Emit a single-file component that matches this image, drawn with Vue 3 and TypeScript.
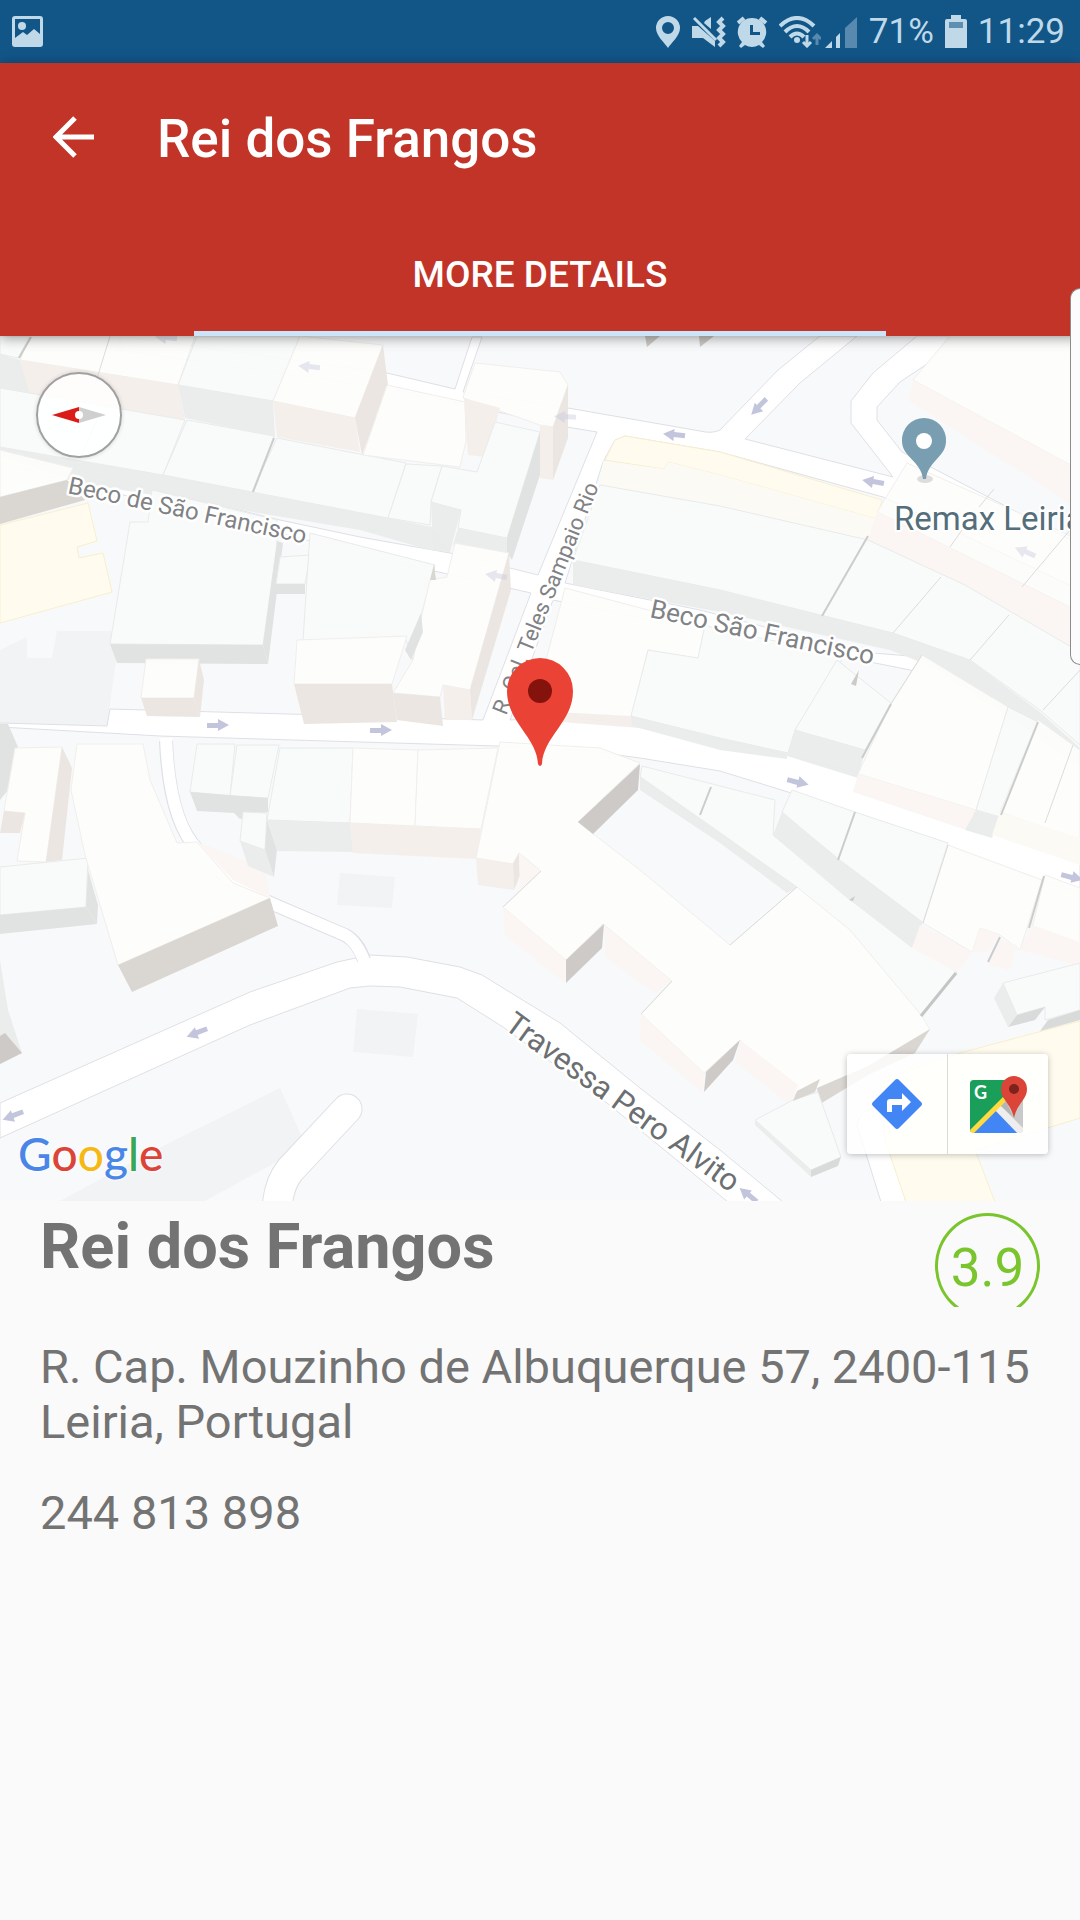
<script setup lang="ts">
interface Place {
  name: string
  rating: string
  address: string
  phone: string
}

interface Arrow {
  x: number
  y: number
  angle: number
  faint?: boolean
}

const place: Place = {
  name: 'Rei dos Frangos',
  rating: '3.9',
  address: 'R. Cap. Mouzinho de Albuquerque 57, 2400-115 Leiria, Portugal',
  phone: '244 813 898',
}

// [style class, polygon points] in map coordinates
type Shape = [string, string]

const ground: Shape[] = [
  ['plot', '0,650 27,637 27,658 52,658 57,631 120,631 107,726 0,723'],
  ['plot', '340,873 395,877 392,908 337,905'],
  ['plot', '357,1009 418,1014 413,1057 353,1052'],
  ['plot', '60,1201 155,1150 280,1088 302,1137 280,1160 205,1201'],
  ['sand', '0,525 88,503 97,541 77,547 79,558 103,553 112,592 0,623'],
]

const roads: string[] = [
  'M0,723 L107,726 L110,709 L360,716 L483,720 L531,593 L443,573 L360,554 L280,533 L70,482 L0,462 L0,452 L75,470 L280,520 L360,537 L450,553 L538,575 L597,432 L567,427 L387,388 L120,350 L120,336 L387,373 L455,389 L472,337 L482,337 L463,392 L568,408 L700,431 Q712,434 720,430 L778,370 L820,336 L857,336 L800,383 L745,439 L893,477 L851,423 L851,401 L873,373 L917,336 L953,336 L930,362 L900,382 L877,407 L877,420 L902,452 L1080,545 L1080,590 L883,497 L720,452 L625,436 L615,440 L603,462 L565,583 L700,610 L860,652 L935,658 L925,673 L870,662 L700,630 L553,600 L510,720 L560,717 L640,724 L720,740 L787,755 L860,773 L960,808 L1080,853 L1080,892 L1040,880 L945,845 L855,813 L788,792 L720,771 L640,758 L580,750 L498,746 L360,742 L160,736 L0,727 Z',
  'M0,1103 L250,992 L337,962 L370,955 L407,957 L460,967 L482,975 L560,1023 L640,1088 L720,1150 L783,1202 L728,1202 L673,1157 L607,1103 L503,1027 L457,998 L400,987 L370,986 L350,988 L250,1025 L0,1138 Z',
  'M857,1125 Q860,1108 880,1108 L906,1202 L881,1202 Z',
]

const buildings: Shape[] = [
  ['sand', '615,440 625,436 720,452 882,500 877,519 720,475 668,462 664,469 605,460'],
  ['sand', '885,1140 906,1202 995,1202 975,1150 1080,1118 1080,1021 960,1053 880,1080'],
  // north-west block
  ['grey', '0,336 30,336 18,358 0,354'],
  ['grey-side', '0,354 20,360 30,393 0,388'],
  ['cream', '30,336 195,336 178,385 20,360'],
  ['cream-side', '20,360 178,385 185,420 30,395'],
  ['grey', '197,336 300,336 273,401 178,385'],
  ['grey-side', '178,385 273,401 275,437 185,418'],
  ['cream', '300,336 383,345 355,418 273,401'],
  ['cream-side', '273,401 355,418 360,452 277,437'],
  ['cream-shade', '383,345 388,385 362,455 355,418'],
  ['grey-side', '0,447 163,475 252,492 388,518 432,527 450,552 430,550 360,530 75,482 0,456'],
  ['grey', '0,388 185,420 163,475 0,447'],
  ['grey', '187,420 274,436 252,492 163,475'],
  ['grey', '277,438 406,463 388,518 252,492'],
  ['cream', '387,385 465,402 466,441 460,467 363,455'],
  ['grey', '406,464 442,466 431,502 430,525 388,518'],
  ['cream', '475,363 560,372 568,385 553,427 540,425 463,398 464,394'],
  ['cream-side', '464,398 500,408 487,457 468,455'],
  ['cream-side', '540,425 553,427 553,480 540,478'],
  ['cream-shade', '568,385 568,438 553,480 553,427'],
  ['grey', '495,422 540,432 507,538 458,528 461,510 431,502 442,466 477,472'],
  ['grey-side', '431,502 461,510 450,552 433,550'],
  ['grey-side', '458,528 507,538 507,553 453,545'],
  ['grey-shade', '540,432 540,475 512,560 507,553 507,538'],
  // blocks along Beco de São Francisco
  ['cream', '0,450 73,468 67,480 0,497'],
  ['dark', '0,497 67,480 85,500 0,524'],
  ['grey', '130,522 148,522 152,490 277,520 277,545 263,645 110,644'],
  ['grey-shade', '110,644 263,645 268,664 117,663'],
  ['grey-shade', '277,541 283,543 268,664 263,645'],
  ['grey', '280,557 310,555 305,584 276,584'],
  ['grey-shade', '276,584 305,584 305,594 276,594'],
  ['cream', '146,659 199,659 194,698 141,698'],
  ['cream-shade', '141,698 194,698 200,717 147,716'],
  ['cream-shade', '199,659 204,680 200,717 194,698'],
  ['grey', '310,533 435,565 422,612 413,660 405,637 303,641'],
  ['cream', '455,543 509,553 470,690 443,685 440,697 393,693 413,660 423,610 430,580 447,577'],
  ['dark', '434,564 436,580 430,580'],
  ['grey-shade', '421,613 423,632 411,660 405,650'],
  ['cream', '297,640 407,636 392,684 294,684'],
  ['cream-shade', '294,684 392,684 397,722 304,724'],
  ['cream-shade', '393,693 440,697 443,726 397,720'],
  ['cream-side', '443,685 470,690 472,720 445,720'],
  ['cream-shade', '509,553 511,590 472,720 470,690'],
  // south-west blocks
  ['grey-shade', '0,724 8,724 18,747 8,790 0,800'],
  ['cream', '15,748 62,747 46,862 17,861 25,813 4,811'],
  ['cream-shade', '62,747 72,768 62,860 46,862'],
  ['cream-shade', '4,811 25,813 20,833 0,833'],
  ['grey', '0,867 88,858 86,907 0,915'],
  ['grey-shade', '0,915 86,907 97,924 0,934'],
  ['grey-shade', '88,870 98,905 97,924 86,907'],
  ['cream', '77,744 143,744 150,780 177,843 197,842 233,883 270,898 118,965 85,855 71,790'],
  ['peach', '197,842 265,868 270,898 233,880'],
  ['dark', '118,965 270,898 278,926 132,992'],
  ['grey', '197,744 235,744 230,796 190,792'],
  ['grey', '237,745 279,745 268,798 230,796'],
  ['grey-shade', '190,792 268,798 268,812 240,819 234,813 197,811'],
  ['grey', '243,812 267,813 265,850 240,841'],
  ['grey-side', '240,841 265,850 274,877 248,866'],
  ['grey-shade', '267,820 277,850 274,877 265,850'],
  ['grey', '280,748 353,748 350,823 267,820'],
  ['grey-side', '267,820 350,823 353,852 277,851'],
  ['cream', '353,748 418,750 415,826 350,823'],
  ['cream', '418,750 498,748 481,829 415,826'],
  ['cream-side', '350,823 481,829 477,859 353,853'],
  ['grey-side', '0,960 8,1010 22,1053 0,1064'],
  ['darker', '5,1033 22,1053 0,1064 0,1036'],
  // north-east blocks
  ['cream', '950,336 1080,336 1080,470 913,380'],
  ['peach', '913,380 1080,470 1080,510 908,400'],
  ['cream faded', '907,463 1080,540 1080,612 877,512'],
  ['ivory', '603,461 664,469 668,462 720,475 877,519 868,540 720,512 600,487'],
  ['peach', '877,512 1080,612 1080,652 868,540'],
  ['grey', '600,485 720,506 868,540 965,585 1080,652 1080,745 1040,710 970,660 893,633 720,590 573,560'],
  ['grey-side', '573,560 720,590 893,633 970,660 1040,712 1080,748 1080,768 1038,738 935,668 890,650 720,612 573,585'],
  ['darker', '645,336 660,336 647,347'],
  ['darker', '699,336 714,336 700,347'],
  ['cream', '565,588 705,625 698,660 648,650 631,718 550,712 535,702'],
  ['cream-side', '555,712 631,716 720,738 720,746 640,728 560,722'],
  ['grey', '648,650 698,658 705,625 720,630 845,655 795,730 788,753 720,738 631,716'],
  ['grey-side', '631,716 720,738 787,753 787,759 720,750 632,726'],
  ['grey', '837,660 891,703 865,750 795,730'],
  ['grey-side', '795,730 865,750 858,778 787,756'],
  ['cream', '922,655 1008,707 976,810 858,774 891,703'],
  ['peach', '858,774 976,810 966,830 853,792'],
  ['grey', '1008,707 1038,722 1000,817 976,810'],
  ['grey-side', '976,810 1000,817 992,838 965,830'],
  ['cream', '1038,720 1080,750 1080,840 1000,812'],
  ['ivory', '1000,812 1080,838 1080,865 992,835'],
  // south-east blocks
  ['grey', '642,766 775,800 773,835 850,900 957,972 921,1016 797,887 640,778'],
  ['grey-side', '640,776 720,832 797,887 787,893 720,843 640,790'],
  ['grey', '792,790 855,812 838,860 782,812'],
  ['grey', '855,812 948,843 923,923 838,860'],
  ['grey-side', '782,812 838,858 923,922 912,948 850,900 813,868 773,835'],
  ['cream', '948,845 1042,880 1020,950 1000,935 980,928 972,952 923,923'],
  ['peach', '920,925 972,952 957,972 912,948'],
  ['peach', '980,928 1000,935 988,952 972,952'],
  ['peach', '1000,940 1017,945 1010,970 988,965'],
  ['cream', '1045,875 1080,888 1080,945 1032,928'],
  ['peach', '1032,925 1080,942 1080,966 1020,950'],
  ['grey', '1003,983 1080,963 1080,1010 1045,1020 1045,1007 1017,1015'],
  ['grey-side', '1003,983 994,998 1008,1027 1017,1015'],
  ['grey-deep', '1017,1015 1045,1007 1035,1020 1008,1027'],
  ['grey-deep', '1048,1020 1080,1010 1080,1020 1040,1031'],
  // central building
  ['cream', '500,742 600,748 640,763 578,822 640,870 730,945 797,887 850,930 922,1016 930,1030 868,1068 820,1088 793,1095 740,1040 704,1073 641,1014 672,981 603,924 566,960 503,907 541,871 519,853 513,864 476,858'],
  ['darker', '640,764 638,790 593,834 578,822'],
  ['cream-side', '476,858 513,864 514,890 478,885'],
  ['cream-shade', '513,864 519,853 520,875 514,890'],
  ['peach', '519,855 541,871 520,890'],
  ['darker', '604,924 602,948 566,983 566,960'],
  ['peach', '503,907 566,960 565,983 505,935'],
  ['peach', '605,926 672,981 655,993 605,957'],
  ['peach', '641,1014 704,1073 703,1093 640,1040'],
  ['darker', '740,1040 733,1060 704,1092 706,1072'],
  ['peach', '740,1040 798,1085 790,1105 735,1062'],
  ['dark', '930,1029 915,1053 868,1075 820,1104 817,1088 868,1066'],
  ['grey', '755,1120 793,1100 818,1092 841,1157 811,1170'],
  ['dark', '820,1079 815,1092 793,1101 797,1091'],
  ['grey-side', '755,1120 811,1170 811,1177 755,1125'],
  ['grey-deep', '811,1170 841,1157 838,1166 811,1177'],
  ['darker', '859,670 856,686 851,684'],
  ['darker', '855,896 853,901 849,900'],
]

const creases: Shape[] = [
  ['strong', 'M868,536 L822,616'],
  ['soft', 'M941,577 L893,633'],
  ['soft', 'M1009,615 L970,660'],
  ['soft', 'M994,489 L979,507 M962,530 L950,547'],
  ['soft', 'M1070,530 L1022,587'],
  ['soft', 'M1080,670 L1043,710'],
  ['strong', 'M891,704 L862,758'],
  ['soft', 'M891,704 L922,655'],
  ['strong', 'M1038,722 L1001,815'],
  ['soft', 'M1073,745 L1045,823'],
  ['strong', 'M855,812 L838,860'],
  ['soft', 'M948,845 L923,923'],
  ['strong', 'M1044,876 L1029,928'],
  ['strong', 'M1000,937 L988,962'],
  ['soft', 'M797,887 L730,945'],
  ['strong', 'M711,787 L700,815'],
  ['bold', 'M956,973 L921,1016'],
  ['strong', 'M31,337 L19,358'],
  ['strong', 'M274,438 L253,492'],
  ['soft', 'M541,871 L503,907'],
  ['soft', 'M672,981 L641,1014'],
  ['soft', 'M110,336 L95,385'],
  ['soft', 'M80,458 L97,420'],
]

const arrows: Arrow[] = [
  { x: 218, y: 725, angle: 0 },
  { x: 381, y: 730, angle: 0 },
  { x: 798, y: 782, angle: 15 },
  { x: 1072, y: 877, angle: 15 },
  { x: 674, y: 435, angle: 186 },
  { x: 873, y: 482, angle: 190 },
  { x: 759, y: 407, angle: 135 },
  { x: 197, y: 1033, angle: 160 },
  { x: 13, y: 1116, angle: 160 },
  { x: 565, y: 417, angle: 184, faint: true },
  { x: 1025, y: 552, angle: 204, faint: true },
  { x: 309, y: 367, angle: 186, faint: true },
  { x: 166, y: 338, angle: 186, faint: true },
  { x: 496, y: 576, angle: 190, faint: true },
  { x: 748, y: 1195, angle: 220 },
]
</script>

<template>
  <div class="screen">
    <div class="status">
      <svg class="status-photo" width="31" height="31" viewBox="0 0 31 31" aria-label="Screenshot saved">
        <path fill-rule="evenodd" d="M3,0 H28 Q31,0 31,3 V28 Q31,31 28,31 H3 Q0,31 0,28 V3 Q0,0 3,0 Z M3,3 V22 L11,16 L15,19 L22,13 L28,18 V3 Z" />
        <circle cx="10" cy="10" r="4" />
      </svg>
      <div class="status-right">
        <svg width="24" height="32" viewBox="0 0 24 32" aria-label="Location">
          <path fill-rule="evenodd" d="M12,0 A12,12 0 0 1 24,12 C24,20 15,27 12,32 C9,27 0,20 0,12 A12,12 0 0 1 12,0 Z M12,6 A6,6 0 1 0 12,18 A6,6 0 1 0 12,6 Z" />
        </svg>
        <svg width="35" height="32" viewBox="0 0 35 32" aria-label="Vibrate">
          <path d="M1,10 H7 L24,25 V31 L12,22 H1 Z M14,5 L20,1 V13 L13,7 Z" />
          <path class="line" d="M3,2 L25,24" stroke-width="3" />
          <path class="line" d="M32,2 L28,6 L32,10 L28,14 L32,18 L28,22 L32,26 L28,30" stroke-width="4" />
        </svg>
        <svg width="31" height="32" viewBox="0 0 31 32" aria-label="Alarm">
          <path fill-rule="evenodd" d="M15,2 A14,14 0 0 1 25,26 L28,30 L26,32 L22,29 A14,14 0 0 1 8,29 L4,32 L2,30 L5,26 A14,14 0 0 1 15,2 Z M13,9 V19 H23 V16 H16 V9 Z" />
          <path class="line" d="M1,7 L7,2 M23,2 L29,7" stroke-width="4" />
        </svg>
        <div class="network">
          <svg width="42" height="32" viewBox="0 0 42 32" aria-label="Wi-Fi">
            <path class="line" d="M1,10 Q18,-6 35,10 M6,16 Q18,4 30,16 M11,21 Q18,14 25,21" stroke-width="4" />
            <circle cx="18" cy="24" r="3" />
            <path class="line" d="M28,19 V29 M24,26 L28,30 L32,26" stroke-width="3" />
            <path class="line dim" d="M38,29 V20 M34,23 L38,19 L42,23" stroke-width="3" />
          </svg>
          <svg width="33" height="32" viewBox="0 0 33 32" aria-label="Mobile signal">
            <path d="M0,32 L7,25 V32 Z M11,21 L15,17 V32 H11 Z" />
            <path class="dim" d="M20,12 L32,1 V32 H20 Z" />
          </svg>
        </div>
        <span class="status-text">71%</span>
        <svg width="22" height="33" viewBox="0 0 22 33" aria-label="Battery">
          <path d="M6,0 H16 V4 H20 Q22,4 22,6 V33 H0 V6 Q0,4 2,4 H6 Z" />
          <rect class="drained" x="4" y="7" width="14" height="6" />
        </svg>
        <span class="status-text">11:29</span>
      </div>
    </div>

    <header class="app-bar">
      <div class="toolbar">
        <button class="back" type="button" aria-label="Back">
          <svg width="42" height="42" viewBox="0 0 42 42">
            <path d="M41,21 H4 M22,2 L3,21 L22,40" />
          </svg>
        </button>
        <h1 class="title">{{ place.name }}</h1>
      </div>
      <nav class="tabs">
        <button class="tab" type="button">MORE DETAILS</button>
      </nav>
    </header>

    <section class="map" aria-label="Map">
      <svg class="map-canvas" viewBox="0 336 1080 865">
        <polygon v-for="([kind, points], i) in ground" :key="`g${i}`" :class="kind" :points="points" />
        <path v-for="(d, i) in roads" :key="`r${i}`" class="road" :d="d" />
        <path class="lane-edge" d="M166,741 C168,790 178,830 198,850 C225,880 250,895 275,905 L345,935 Q358,942 364,960" stroke-width="14" />
        <path class="lane" d="M166,738 C168,790 178,830 198,850 C225,880 250,895 275,905 L345,935 Q358,942 366,966" stroke-width="12" />
        <path class="lane-edge round" d="M347,1109 L290,1170 Q278,1185 277,1210" stroke-width="31" />
        <path class="lane round" d="M347,1109 L290,1170 Q278,1185 277,1210" stroke-width="29" />
        <polygon v-for="([kind, points], i) in buildings" :key="`b${i}`" :class="kind" :points="points" />
        <path v-for="([kind, d], i) in creases" :key="`c${i}`" class="crease" :class="kind" :d="d" />
        <path
          v-for="(a, i) in arrows"
          :key="`a${i}`"
          class="arrow"
          :class="{ faint: a.faint }"
          d="M-11,-2 H0 V-6 L11,0 L0,6 V3 H-11 Z"
          :transform="`translate(${a.x} ${a.y}) rotate(${a.angle})`"
        />

        <text class="street" font-size="24" transform="translate(67 493) rotate(12)">Beco de São Francisco</text>
        <text class="street" font-size="26" transform="translate(649 617) rotate(12)">Beco São Francisco</text>
        <text class="street" font-size="22" transform="translate(506 716) rotate(-68)">R. Cel. Teles Sampaio Rio</text>
        <text class="street strong-label" font-size="31" transform="translate(503 1028) rotate(36)">Travessa Pero Alvito</text>

        <ellipse class="pin-shadow" cx="925" cy="479" rx="8" ry="4" />
        <path class="poi" d="M924,418 A22,22 0 0 1 946,441 C946,457 928,461 926,479 H923 C921,461 902,457 902,441 A22,22 0 0 1 924,418 Z" />
        <circle cx="924" cy="441" r="8" fill="#fff" />
        <text class="poi-name" x="894" y="530">Remax Leiria</text>

        <path class="pin" d="M540,658 A33,33 0 0 1 573,691 C573,722 543,737 542,764 Q540,768 538,764 C537,737 507,722 507,691 A33,33 0 0 1 540,658 Z" />
        <circle cx="540" cy="691" r="12" fill="#84120d" />
      </svg>

      <button class="compass" type="button" aria-label="Reset north">
        <svg width="54" height="16" viewBox="0 0 54 16">
          <path d="M0,8 L27,0 V16 Z" fill="#db1b17" />
          <path d="M54,8 L27,0 V16 Z" fill="#cfcfcf" />
          <circle cx="27" cy="8" r="4" fill="#fff" />
        </svg>
      </button>

      <div class="google" aria-label="Google">
        <span class="blue">G</span><span class="red">o</span><span class="yellow">o</span><span class="blue">g</span><span class="green">l</span><span class="red">e</span>
      </div>

      <div class="map-actions">
        <button type="button" aria-label="Directions">
          <svg width="52" height="52" viewBox="0 0 52 52">
            <path d="M24,2 Q26,0 28,2 L50,24 Q52,26 50,28 L28,50 Q26,52 24,50 L2,28 Q0,26 2,24 Z" fill="#4285f4" />
            <path d="M16,34 V24 Q16,21 19,21 H31 V15 L40,24 L31,33 V27 H21 V34 Z" fill="#fff" />
          </svg>
        </button>
        <button type="button" aria-label="Open in Google Maps">
          <svg width="58" height="58" viewBox="0 0 58 58">
            <defs>
              <clipPath id="tile"><rect x="1" y="5" width="53" height="53" rx="4" /></clipPath>
            </defs>
            <g clip-path="url(#tile)">
              <rect x="1" y="5" width="53" height="53" fill="#c9c9c9" />
              <path d="M1,5 H54 L1,58 Z" fill="#1a9f5b" />
              <path d="M-2,58 L34,22 L39,27 L8,58 Z" fill="#ffdb40" />
              <path d="M5,58 L27,36 L50,58 Z" fill="#4285f4" />
              <path d="M27,36 L32,31 L58,57 L50,60 Z" fill="#eee" />
              <path d="M32,31 L37,26 L44,42 Z" fill="#b5b5b5" />
            </g>
            <text x="5" y="24" class="tile-letter">G</text>
            <path d="M45,1 A13,13 0 0 1 58,14 C58,25 48,28 45,43 C42,28 32,25 32,14 A13,13 0 0 1 45,1 Z" fill="#db4437" />
            <circle cx="45" cy="14" r="5" fill="#7b231c" />
          </svg>
        </button>
      </div>
    </section>

    <main class="details">
      <div class="heading">
        <h2 class="name">{{ place.name }}</h2>
        <div class="rating"><span class="ring">{{ place.rating }}</span></div>
      </div>
      <p class="address">{{ place.address }}</p>
      <p class="phone">{{ place.phone }}</p>
    </main>

    <div class="edge-handle"></div>
  </div>
</template>

<style>
body {
  background: #fafafa;
}
</style>

<style scoped>
.screen {
  position: relative;
  min-height: 100vh;
  overflow: hidden;
  background: #fafafa;
  font-family: Roboto, 'Liberation Sans', sans-serif;
}

button {
  padding: 0;
  border: 0;
  background: none;
  font: inherit;
  color: inherit;
}

.status {
  display: flex;
  align-items: center;
  justify-content: space-between;
  height: 63px;
  padding: 0 15px 0 12px;
  background: #125688;
  color: #c0d9e8;
}

.status svg {
  display: block;
  flex: none;
  fill: #c0d9e8;
}

.status .line {
  fill: none;
  stroke: #c0d9e8;
}

.status .dim {
  opacity: 0.4;
}

.status .drained {
  fill: #5f8fb0;
}

.status-right {
  display: flex;
  align-items: center;
  gap: 11px;
}

.network {
  display: flex;
  gap: 4px;
}

.status-text {
  font-size: 35px;
  line-height: 63px;
}

.app-bar {
  position: relative;
  z-index: 1;
  background: #c23427;
  color: #fff;
  box-shadow: 0 2px 12px rgba(0, 0, 0, 0.4);
}

.toolbar {
  display: flex;
  align-items: center;
  height: 147px;
  padding-left: 53px;
  gap: 62px;
}

.back svg {
  display: block;
  fill: none;
  stroke: #fff;
  stroke-width: 5px;
}

.title {
  margin: 0;
  padding-top: 4px;
  font-size: 53px;
  line-height: 64px;
  font-weight: 500;
}

.tabs {
  display: flex;
  justify-content: center;
}

.tab {
  box-sizing: border-box;
  width: 64%;
  height: 126px;
  padding-top: 8px;
  border-bottom: 5px solid #cbe4fa;
  font-size: 37px;
  font-weight: 500;
}

.map {
  position: relative;
  background: #f8f9fb;
}

.map-canvas {
  display: block;
  width: 100%;
}

.plot {
  fill: #f1f3f5;
}

.sand {
  fill: #fffcef;
  stroke: #f8efcf;
}

.road {
  fill: #fff;
  stroke: #dee0e6;
  stroke-width: 1px;
}

.lane,
.lane-edge {
  fill: none;
  stroke: #fff;
}

.lane-edge {
  stroke: #dee0e6;
}

.round {
  stroke-linecap: round;
}

.grey {
  fill: #f9fbfa;
  stroke: #e9ebeb;
  fill-opacity: 0.94;
}

.grey-side {
  fill: #e9ebeb;
  fill-opacity: 0.92;
}

.grey-shade {
  fill: #e1e3e3;
}

.grey-deep {
  fill: #d9dbdb;
}

.cream {
  fill: #fdfdfb;
  fill-opacity: 0.94;
  stroke: #f1efec;
}

.faded {
  fill-opacity: 0.8;
}

.cream-side {
  fill: #f4eeeb;
  fill-opacity: 0.94;
}

.cream-shade {
  fill: #ebe6e2;
}

.ivory {
  fill: #fcfaf5;
}

.peach {
  fill: #fbf6f3;
}

.dark {
  fill: #dad7d3;
}

.darker {
  fill: #cdcac7;
}

.crease {
  fill: none;
  stroke: #dcdcdc;
}

.crease.strong {
  stroke: #cbcccc;
  stroke-width: 2px;
}

.crease.bold {
  stroke: #c4c6c6;
  stroke-width: 3px;
}

.arrow {
  fill: #c3c5dc;
}

.arrow.faint {
  opacity: 0.4;
}

.street {
  fill: #808285;
  stroke: #fff;
  stroke-width: 5px;
  stroke-linejoin: round;
  paint-order: stroke;
}

.strong-label {
  fill: #6c6f72;
}

.pin-shadow {
  fill: #ddd;
}

.poi {
  fill: #7a9eb1;
}

.poi-name {
  fill: #546e7a;
  font-size: 33px;
  stroke: #fff;
  stroke-width: 4px;
  stroke-linejoin: round;
  paint-order: stroke;
}

.pin {
  fill: #ea4335;
}

.compass {
  position: absolute;
  top: 36px;
  left: 36px;
  box-sizing: border-box;
  display: grid;
  place-items: center;
  width: 86px;
  height: 86px;
  border: 2px solid #a0a0a0;
  border-radius: 50%;
  background: rgba(255, 255, 255, 0.85);
  box-shadow: 0 0 4px rgba(0, 0, 0, 0.15);
}

.google {
  position: absolute;
  bottom: 19px;
  left: 18px;
  display: flex;
  font-family: Lato, 'Liberation Sans', sans-serif;
  font-size: 46px;
  line-height: 56px;
  font-weight: 500;
  text-shadow: 0 0 3px #fff, 0 0 3px #fff;
}

.blue {
  color: #4a86e8;
}

.red {
  color: #db4437;
}

.yellow {
  color: #f4b916;
}

.green {
  color: #3aa757;
}

.map-actions {
  position: absolute;
  right: 32px;
  bottom: 47px;
  display: flex;
  border-radius: 4px;
  background: rgba(255, 255, 255, 0.82);
  box-shadow: 0 1px 6px rgba(0, 0, 0, 0.25);
}

.map-actions button {
  display: grid;
  place-items: center;
  width: 100px;
  height: 100px;
}

.map-actions button + button {
  width: 101px;
  border-left: 1px solid #dcdcdc;
}

.map-actions svg {
  display: block;
}

.tile-letter {
  fill: #fff;
  font-family: Lato, 'Liberation Sans', sans-serif;
  font-size: 18px;
  font-weight: 700;
}

.details {
  padding: 12px 40px;
  color: #737373;
}

.heading {
  display: flex;
  align-items: flex-start;
  justify-content: space-between;
}

.name {
  margin: 0;
  font-size: 63px;
  line-height: 68px;
  font-weight: 700;
}

.rating {
  height: 94px;
  overflow: hidden;
}

.ring {
  display: block;
  box-sizing: border-box;
  width: 105px;
  height: 106px;
  border: 3px solid #7ac52e;
  border-radius: 50%;
  color: #7ac52e;
  font-size: 53px;
  line-height: 104px;
  text-align: center;
}

.address,
.phone {
  margin: 0;
  font-size: 47px;
  line-height: 55px;
}

.address {
  padding: 32px 0 36px;
}

.edge-handle {
  position: absolute;
  top: 288px;
  right: 0;
  z-index: 2;
  width: 9px;
  height: 375px;
  border: 1px solid #8c8c8c;
  border-right: 0;
  border-radius: 12px 0 0 12px;
  background: #fcfcfc;
}
</style>
